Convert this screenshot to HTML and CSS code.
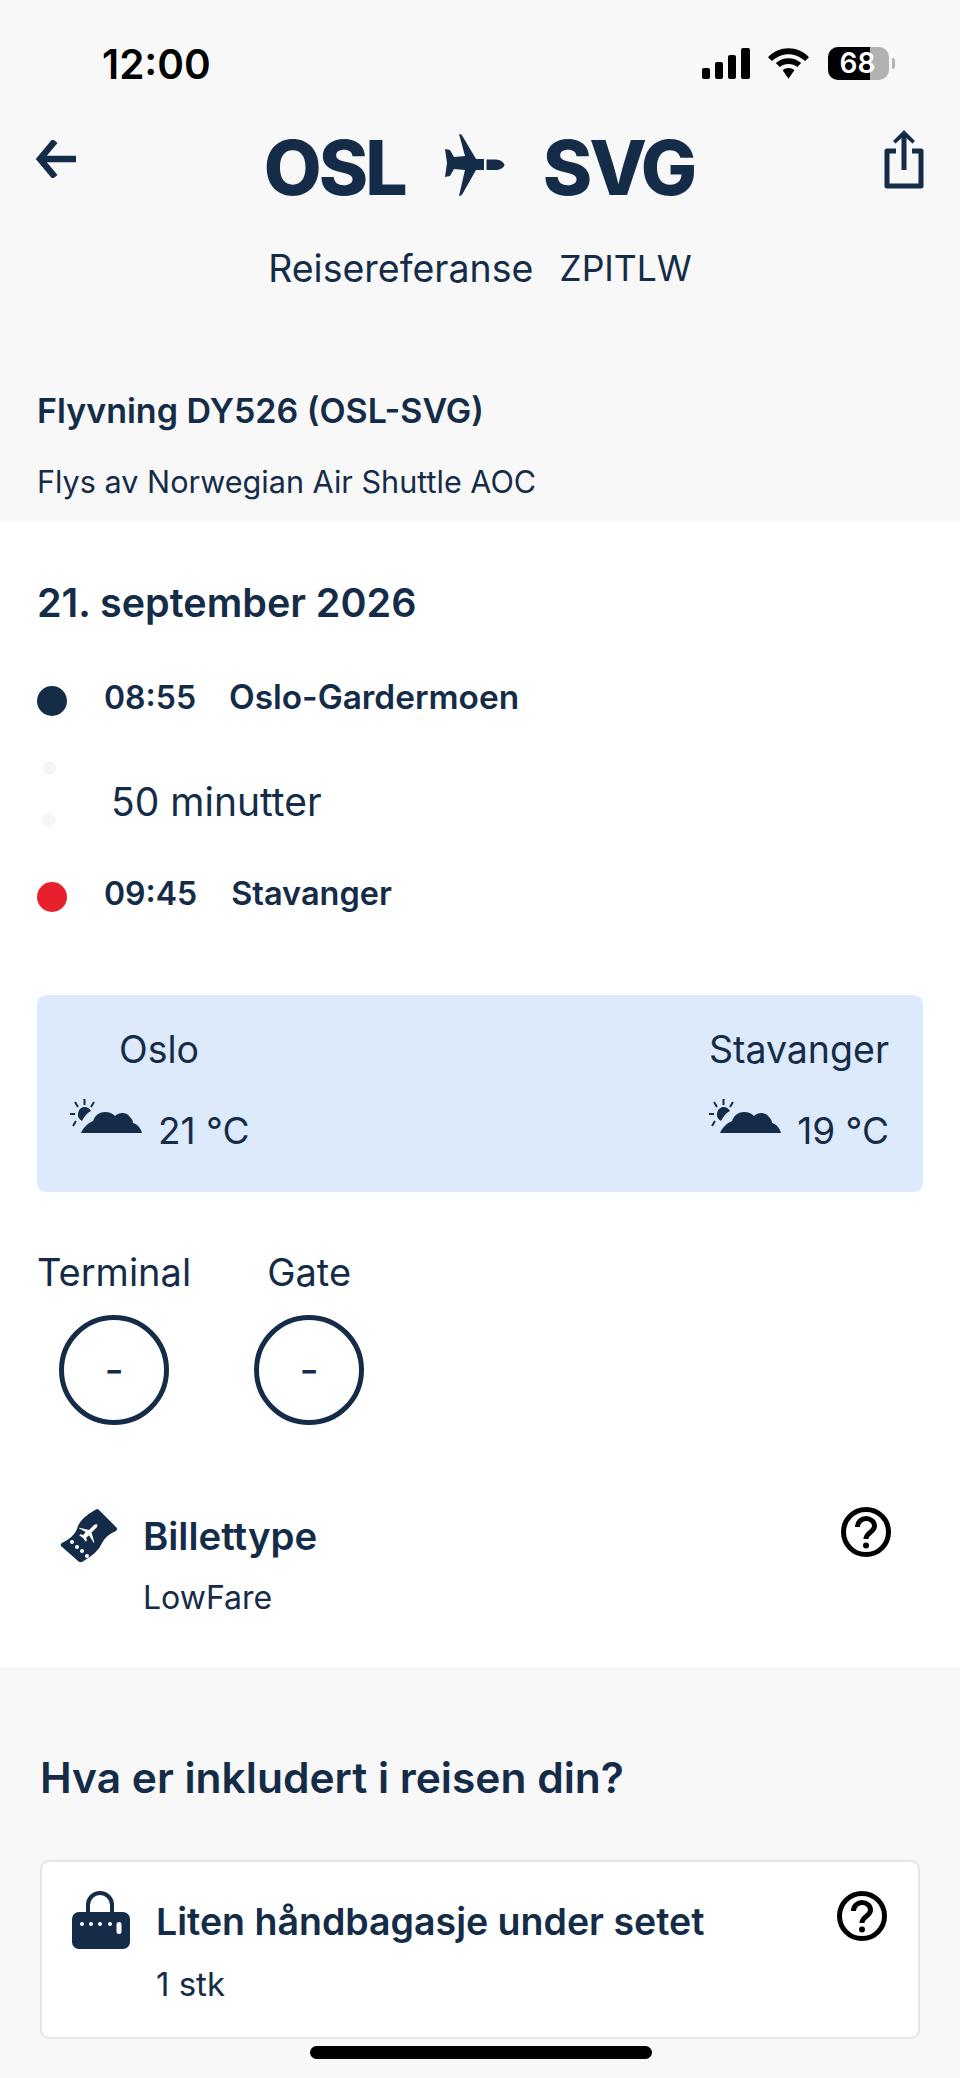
FILE: index.html
```html
<!DOCTYPE html>
<html lang="nb">
<head>
    <meta charset="UTF-8">
    <meta name="viewport" content="width=device-width, initial-scale=1.0">
    <title>Flyvning DY526</title>
    <link rel="stylesheet" href="styles.css">
</head>
<body>
    <header class="top">
        <div class="status">
            <span class="clock">12:00</span>
            <div class="status-icons">
                <svg class="signal" width="48" height="31" viewBox="0 0 48 31"><rect x="0" y="20" width="8" height="11" rx="2"/><rect x="13" y="14" width="8" height="17" rx="2"/><rect x="26" y="7" width="8" height="24" rx="2"/><rect x="39" y="0" width="9" height="31" rx="2"/></svg>
                <svg class="wifi" width="41" height="31" viewBox="0 0 42 31"><path d="M21 0C13 0 6 3 0 9l4 4c5-4.500 11-7 17-7s12 2.500 17 7l4-4C36 3 29 0 21 0z"/><path d="M21 10c-5 0-10 2-13 5l4 4c2.500-2 5.500-3 9-3s6.500 1 9 3l4-4c-3-3-8-5-13-5z"/><path d="M21 20c-3 0-5 1-6 2.500L21 31l6-8.500C26 21 24 20 21 20z"/></svg>
                <div class="battery"><div class="battery-fill"></div><span class="battery-num">68</span></div>
                <div class="battery-cap"></div>
            </div>
        </div>

        <div class="route-row">
            <svg class="back" width="42" height="38" viewBox="0 0 42 38"><path d="M20 1L5 19l15 18M5 19h36" fill="none" stroke="#152c48" stroke-width="6.500"/></svg>
            <div class="route">
                <span>OSL</span>
                <svg class="route-plane" width="62" height="62" viewBox="0 0 62 62"><path d="M16 0c2 0 3 1 4 3l13 22h8v11h-8L20 59c-1 2-2 3-4 3l6-26-11-1-4 7-5 1 2-14-2-14 5 1 4 7 11-1z"/><path d="M43.500 25.500H53c4 0 8 3 8.500 5.500-.5 2.500-4.500 5-8.500 5h-9.500z"/></svg>
                <span>SVG</span>
            </div>
            <svg class="share" width="42" height="60" viewBox="0 0 42 60"><path d="M13 21H4v35h34V21h-9" fill="none" stroke="#152c48" stroke-width="5" stroke-linejoin="round"/><path d="M21 40V4" stroke="#152c48" stroke-width="5"/><path d="M21 0L10 11l2.500 2.500L21 6l8.500 7.500L32 11z" fill="#152c48"/></svg>
        </div>

        <p class="reference"><span>Reisereferanse</span><span class="reference-code">ZPITLW</span></p>

        <h2 class="flight">Flyvning DY526 (OSL-SVG)</h2>
        <p class="operator">Flys av Norwegian Air Shuttle AOC</p>
    </header>

    <main class="details">
        <h2 class="date">21. september 2026</h2>

        <div class="stop stop-first">
            <span class="dot"></span>
            <strong class="time">08:55</strong>
            <strong class="place">Oslo-Gardermoen</strong>
        </div>
        <div class="duration">
            <div class="faint-dots"><span></span><span></span></div>
            <span>50 minutter</span>
        </div>
        <div class="stop">
            <span class="dot dot-red"></span>
            <strong class="time">09:45</strong>
            <strong class="place place-last">Stavanger</strong>
        </div>

        <div class="weather">
            <div class="weather-col">
                <div class="weather-city weather-city-left">Oslo</div>
                <div class="weather-temp">
                    <svg width="72" height="36" viewBox="0 0 72 36"><use href="#sun-cloud"/></svg>
                    <span>21 °C</span>
                </div>
            </div>
            <div class="weather-col weather-col-right">
                <div class="weather-city">Stavanger</div>
                <div class="weather-temp">
                    <svg width="72" height="36" viewBox="0 0 72 36"><use href="#sun-cloud"/></svg>
                    <span>19 °C</span>
                </div>
            </div>
        </div>

        <div class="gates">
            <div class="gate-col">
                <span>Terminal</span>
                <div class="gate-circle">-</div>
            </div>
            <div class="gate-col">
                <span>Gate</span>
                <div class="gate-circle">-</div>
            </div>
        </div>

        <div class="ticket">
            <svg class="ticket-icon" width="58" height="56" viewBox="0 0 58 56">
                <path d="M37 0Q38 0 39 1L56 18Q58 20 56 22Q46 26 42 34Q38 44 22 53Q20 54 18 52L1 37Q0 35 2 34Q14 28 17 20Q19 10 35 1z"/>
                <g fill="#fff">
                    <circle cx="12" cy="33" r="2"/><circle cx="17" cy="38" r="2"/><circle cx="22" cy="42" r="2"/><circle cx="27" cy="47" r="2"/>
                    <path transform="translate(30 23) rotate(-45) scale(.34) translate(-31 -31)" d="M16 0c2 0 3 1 4 3l13 22h20c4 0 8 3 8.500 5.500-.5 2.500-4.500 5-8.500 5H33L20 59c-1 2-2 3-4 3l6-26-11-1-4 7-5 1 2-14-2-14 5 1 4 7 11-1z"/>
                </g>
            </svg>
            <div class="ticket-text">
                <strong>Billettype</strong>
                <span>LowFare</span>
            </div>
            <svg class="help" width="50" height="50" viewBox="0 0 50 50"><use href="#help-mark"/></svg>
        </div>
    </main>

    <section class="included">
        <h2>Hva er inkludert i reisen din?</h2>
        <div class="card">
            <svg class="bag-icon" width="58" height="60" viewBox="0 0 58 60"><path d="M16 21v-7a12 12 0 0 1 24 0v7" fill="none" stroke="#152c48" stroke-width="4"/><path fill-rule="evenodd" d="M7 21h44a7 7 0 0 1 7 7v23a7 7 0 0 1-7 7H7a7 7 0 0 1-7-7V28a7 7 0 0 1 7-7zM10 31a2 2 0 1 0 0 4 2 2 0 0 0 0-4zM19 31a2 2 0 1 0 0 4 2 2 0 0 0 0-4zM28 31a2 2 0 1 0 0 4 2 2 0 0 0 0-4zM38 31a2 2 0 1 0 0 4 2 2 0 0 0 0-4zM47 31a2.500 2.500 0 0 0-2.500 2.500v7a2.500 2.500 0 0 0 5 0v-7A2.500 2.500 0 0 0 47 31z"/></svg>
            <div class="card-text">
                <strong>Liten håndbagasje under setet</strong>
                <span>1 stk</span>
            </div>
            <svg class="help" width="50" height="50" viewBox="0 0 50 50"><use href="#help-mark"/></svg>
        </div>
    </section>

    <div class="home-bar"></div>

    <svg class="defs" width="0" height="0">
        <defs>
            <g id="sun-cloud">
                <path fill="#152c48" d="M14 8a7.500 7.500 0 0 1 7 4c-4 2-7 6-9 10a7.500 7.500 0 0 1 2-14z"/>
                <path fill="none" stroke="#152c48" stroke-width="2" d="M14.500 0v6M5 3l3 5M24 3l-3 5M0 15h5M3 27l3-5"/>
                <path fill="#152c48" d="M11 34C13 29 18 24 23 22C25 16 30 13 35 13C40 13 43 15 45 17C49 13 57 13 60 18C62 20 63 22 63 24C67 25 71 29 72 34z"/>
            </g>
            <g id="help-mark">
                <circle cx="25" cy="25" r="22.500" fill="none" stroke="#000" stroke-width="5"/>
                <path d="M16.500 20c0-5 4-8.500 8.500-8.500s8.500 3 8.500 7.500c0 6.500-8.500 6-8.500 13" fill="none" stroke="#000" stroke-width="5"/>
                <circle cx="25" cy="38.500" r="3" fill="#000"/>
            </g>
        </defs>
    </svg>
</body>
</html>
```

FILE: styles.css
```css
* {
    box-sizing: border-box;
}
html, body {
    margin: 0;
    padding: 0;
}
body {
    position: relative;
    height: 2078px;
    overflow: hidden;
    background-color: #f8f8f8;
    color: #152c48;
    font-family: Inter, "Noto Sans", sans-serif;
}
p, h2 {
    margin: 0;
}
svg {
    display: block;
    fill: #152c48;
    flex-shrink: 0;
}
.defs {
    position: absolute;
}

/* top part */
.top {
    height: 522px;
    padding: 0 37px;
}
.status {
    height: 96px;
    padding: 40px 0 0 65px;
    display: flex;
    justify-content: space-between;
    color: #000;
}
.clock {
    margin-top: 2px;
    font-size: 40.500px;
    font-weight: 600;
    line-height: 46px;
}
.status-icons {
    display: flex;
    align-items: center;
    height: 46px;
    padding-right: 28px;
}
.status-icons svg {
    fill: #000;
}
.signal {
    margin-right: 18px;
}
.wifi {
    margin-right: 19px;
}
.battery {
    position: relative;
    width: 61px;
    height: 33px;
    border-radius: 10px;
    overflow: hidden;
    background-color: #b2b2b2;
}
.battery-fill {
    width: 42px;
    height: 33px;
    background-color: #000;
}
.battery-num {
    position: absolute;
    left: 0;
    right: 2px;
    top: 0;
    text-align: center;
    color: #fff;
    font-size: 28px;
    font-weight: 600;
    line-height: 33px;
}
.battery-cap {
    width: 3px;
    height: 11px;
    margin-left: 3px;
    border-radius: 0 3px 3px 0;
    background-color: #b2b2b2;
}
.route-row {
    display: flex;
    align-items: flex-start;
    justify-content: space-between;
    height: 151px;
}
.back {
    margin-top: 44px;
    margin-left: -2px;
}
.route {
    display: flex;
    align-items: center;
    gap: 38px;
    margin-top: 41px;
    margin-right: 2px;
    font-size: 75px;
    font-weight: 800;
    line-height: 62px;
    letter-spacing: -3px;
}
.route-plane {
    margin-top: -6px;
}
.share {
    margin-top: 34px;
    margin-right: -2px;
}
.reference {
    display: flex;
    justify-content: center;
    gap: 26px;
    font-size: 37.500px;
    line-height: 44px;
}
.reference-code {
    font-size: 35.500px;
}
.flight {
    margin-top: 98px;
    font-size: 34px;
    font-weight: 600;
    line-height: 44px;
}
.operator {
    margin-top: 27px;
    font-size: 30.600px;
    line-height: 44px;
}

/* white part */
.details {
    height: 1146px;
    padding: 0 37px;
    background-color: #fff;
}
.date {
    padding-top: 58px;
    font-size: 39.500px;
    font-weight: 600;
    line-height: 46px;
}
.stop {
    display: flex;
    align-items: center;
    height: 44px;
    font-size: 32px;
}
.stop strong {
    font-weight: 600;
}
.stop .place {
    font-size: 33.400px;
}
.stop .place-last {
    margin-left: 1px;
    font-size: 32.500px;
}
.stop-first {
    margin-top: 49px;
}
.time {
    margin-right: 33px;
}
.dot {
    width: 30px;
    height: 30px;
    margin-top: 8px;
    margin-right: 37px;
    border-radius: 50%;
    background-color: #152c48;
}
.dot-red {
    background-color: #e8202e;
}
.duration {
    display: flex;
    align-items: center;
    height: 152px;
    font-size: 39px;
    padding-top: 12px;
}
.faint-dots {
    display: flex;
    flex-direction: column;
    gap: 38px;
    margin-left: 5px;
    margin-right: 55px;
    margin-top: -14px;
}
.faint-dots span {
    display: block;
    width: 14px;
    height: 14px;
    border-radius: 50%;
    background-color: #f6f6f6;
}
.weather {
    display: flex;
    justify-content: space-between;
    height: 197px;
    margin-top: 80px;
    padding: 32px 34px 0 33px;
    border-radius: 9px;
    background-color: #ddeafc;
}
.weather-col-right {
    text-align: right;
}
.weather-col-right .weather-temp {
    justify-content: flex-end;
}
.weather-city {
    font-size: 37.500px;
    line-height: 46px;
}
.weather-city-left {
    margin-left: 49px;
}
.weather-temp {
    display: flex;
    align-items: flex-start;
    gap: 16px;
    margin-top: 26px;
    font-size: 37px;
    line-height: 46px;
}
.weather-temp span {
    margin-top: 9px;
}
.gates {
    display: flex;
    gap: 63px;
    margin-top: 57px;
    font-size: 38px;
    line-height: 46px;
}
.gate-col {
    display: flex;
    flex-direction: column;
    align-items: center;
}
.gate-circle {
    display: flex;
    align-items: center;
    justify-content: center;
    width: 110px;
    height: 110px;
    margin-top: 20px;
    border: 5px solid #152c48;
    border-radius: 50%;
    font-size: 42px;
}
.ticket {
    display: flex;
    align-items: flex-start;
    margin-top: 82px;
    padding-left: 23px;
}
.ticket-icon {
    margin-right: 25px;
    margin-top: 2px;
}
.ticket-text {
    display: flex;
    flex-direction: column;
    flex-grow: 1;
}
.ticket-text strong {
    font-size: 38.400px;
    font-weight: 600;
    line-height: 46px;
    margin-top: 6px;
}
.ticket-text span {
    margin-top: 17px;
    font-size: 32px;
    line-height: 44px;
}
.help {
    margin-right: 32px;
}

/* grey part */
.included {
    padding: 0 40px;
    border-top: 1px solid #f0f0f0;
}
.included h2 {
    margin-top: 85px;
    font-size: 42.500px;
    font-weight: 600;
    line-height: 48px;
}
.card {
    display: flex;
    align-items: flex-start;
    height: 179px;
    margin-top: 58px;
    padding: 29px 31px 0 30px;
    border: 2px solid #e6e6e6;
    border-radius: 9px;
    background-color: #fff;
}
.bag-icon {
    margin-right: 26px;
}
.card-text {
    display: flex;
    flex-direction: column;
    flex-grow: 1;
}
.card-text strong {
    font-size: 37.500px;
    font-weight: 600;
    line-height: 46px;
    margin-top: 8px;
}
.card-text span {
    margin-top: 17px;
    font-size: 33px;
    line-height: 44px;
}
.card .help {
    margin-right: 0;
}
.home-bar {
    position: absolute;
    left: 310px;
    top: 2046px;
    width: 342px;
    height: 13px;
    border-radius: 7px;
    background-color: #000;
}
```
